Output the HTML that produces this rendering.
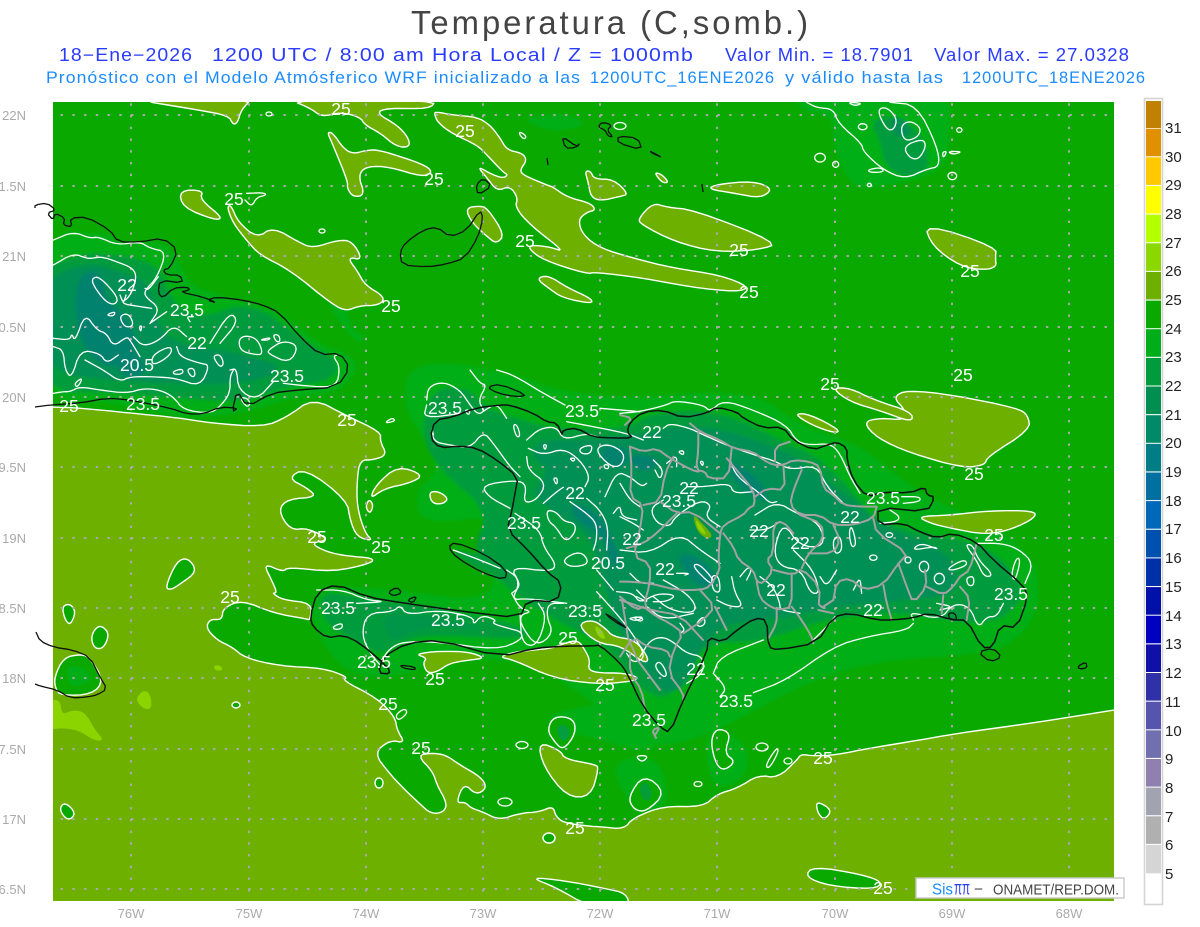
<!DOCTYPE html>
<html lang="es">
<head>
<meta charset="utf-8">
<title>Temperatura (C,somb.)</title>
<style>
html,body{margin:0;padding:0;background:#fff;width:1200px;height:927px;overflow:hidden}
svg{display:block}
text{font-family:"Liberation Sans",sans-serif}
.o{fill:#6eb000;stroke:#fff;stroke-width:1.4;stroke-linejoin:round}
.g{fill:#0aa900;stroke:#fff;stroke-width:1.4;stroke-linejoin:round}
.w polyline,.w polygon,.w ellipse{fill:none;stroke:#fff;stroke-width:1.3;stroke-linejoin:round;stroke-linecap:round;vector-effect:non-scaling-stroke}
.p polyline{fill:none;stroke:#a2a2a2;stroke-width:2;stroke-linejoin:round;stroke-linecap:round;vector-effect:non-scaling-stroke}
.k polyline,.k polygon{fill:none;stroke:#111;stroke-width:1.3;stroke-linejoin:round;vector-effect:non-scaling-stroke}
.l text{fill:#fff;font-size:17.5px;text-anchor:middle;dominant-baseline:central}
.a text{fill:#aaa;font-size:13px}
.c text{fill:#222;font-size:15px}
</style>
</head>
<body>
<svg width="1200" height="927" viewBox="0 0 1200 927" xmlns="http://www.w3.org/2000/svg">
<defs><filter id="b" x="-5%" y="-5%" width="110%" height="110%"><feGaussianBlur stdDeviation="1.6"/></filter></defs>
<rect width="1200" height="927" fill="#fff"/>

<!-- header -->
<text x="411" y="34" font-size="33" fill="#444" letter-spacing="3" textLength="400" lengthAdjust="spacingAndGlyphs">Temperatura (C,somb.)</text>
<g font-size="18" fill="#2a3cff" letter-spacing="1">
<text x="59" y="61" textLength="134" lengthAdjust="spacingAndGlyphs">18−Ene−2026</text>
<text x="212" y="61" textLength="482" lengthAdjust="spacingAndGlyphs">1200 UTC / 8:00 am Hora Local / Z = 1000mb</text>
<text x="725" y="61" textLength="189" lengthAdjust="spacingAndGlyphs">Valor Min. = 18.7901</text>
<text x="934" y="61" textLength="196" lengthAdjust="spacingAndGlyphs">Valor Max. = 27.0328</text>
</g>
<g font-size="17" fill="#1a8cff" letter-spacing="1">
<text x="46" y="83" textLength="535" lengthAdjust="spacingAndGlyphs">Pronóstico con el Modelo Atmósferico WRF inicializado a las</text>
<text x="590" y="83" textLength="185" lengthAdjust="spacingAndGlyphs">1200UTC_16ENE2026</text>
<text x="785" y="83" textLength="159" lengthAdjust="spacingAndGlyphs">y válido hasta las</text>
<text x="962" y="83" textLength="184" lengthAdjust="spacingAndGlyphs">1200UTC_18ENE2026</text>
</g>

<!-- map -->
<clipPath id="m"><rect x="53" y="102" width="1061" height="799"/></clipPath>
<g clip-path="url(#m)">
<rect x="53" y="102" width="1061" height="799" fill="#0aa900"/>

<g class="s" filter="url(#b)">
<!-- halos 23-24 -->
<g fill="#02ae18">
<polygon points="40,232 110,232 120,245 165,240 180,262 190,285 220,295 280,310 320,345 352,355 358,370 340,392 290,398 250,412 190,420 110,402 40,400"/>
<polygon points="405,372 440,360 520,375 560,392 640,398 700,392 760,395 800,425 860,445 900,478 935,500 1030,545 1042,600 1020,640 980,655 880,660 800,685 735,722 680,745 640,745 610,715 560,680 520,660 450,660 385,680 345,672 320,640 310,610 318,585 400,590 470,600 500,585 470,550 500,515 420,525 415,490 440,470 425,440 405,410"/>
<polygon points="793,90 950,90 950,132 947,172 870,190 850,185 833,148 833,115 800,112"/>
<polygon points="543,714 620,700 660,735 650,755 600,740 560,730"/>
<polygon points="612,760 660,755 670,810 640,812 620,790"/>
<polygon points="710,725 750,745 745,780 715,790 705,760"/>
<polygon points="520,118 565,112 590,125 555,132 540,128"/>
<polygon points="325,300 345,300 352,330 365,335 360,345 345,330"/>
</g>

<!-- 22-23 -->
<g fill="#009b3c">
<polygon points="40,272 75,255 110,253 160,265 170,300 200,320 250,300 310,345 340,362 332,380 290,386 240,402 180,398 110,392 40,392"/>
<polygon points="432,388 470,388 484,408 520,420 560,430 630,428 650,413 720,410 790,445 820,458 860,500 875,520 925,535 990,545 1028,592 1000,622 960,622 900,612 830,617 760,642 705,642 682,680 665,700 640,688 620,660 600,642 560,622 540,610 510,590 470,552 490,512 440,470 420,435"/>
<polygon points="318,590 370,600 420,605 522,625 530,640 430,634 400,642 380,655 360,642 325,625"/>
<polygon points="450,548 483,555 505,572 503,578 483,572 457,556"/>
<polygon points="870,120 900,115 925,140 930,170 905,178 885,165 880,140"/>
<polygon points="60,665 90,670 100,682 88,690 65,690"/>
</g>

<!-- 21-22 -->
<g fill="#008f55">
<polygon points="40,280 90,262 120,272 150,282 160,330 180,345 232,352 290,368 240,385 130,382 40,372"/>
<polygon points="540,440 575,440 630,436 700,422 790,452 815,472 860,505 880,527 950,550 960,595 900,600 830,608 780,618 730,622 703,642 690,680 670,695 650,680 640,660 615,622 605,585 590,535 560,515 530,495 550,470 530,455"/>
<polygon points="888,118 905,118 912,135 895,138"/>
</g>
<polygon points="380,615 410,612 500,630 420,626 392,645" fill="#00964a"/>

<!-- 20-21 -->
<g fill="#00826e">
<polygon points="75,278 100,268 106,300 130,320 140,358 105,370 78,340"/>
<polygon points="112,352 130,345 150,372 124,380"/>
<polygon points="597,448 625,445 630,462 612,470"/>
<polygon points="570,500 600,515 612,540 622,560 612,570 603,535 575,520"/>
<polygon points="630,453 660,458 650,472 632,468"/>
<polygon points="677,552 705,560 720,585 700,588 685,572"/>
<polygon points="727,457 760,480 770,503 750,495 730,475"/>
</g>
</g>

<!-- olive main -->
<polygon id="om" class="o" points="50,407 80,408 130,413 180,418 210,423 263,427 287,417 313,398 345,415 381,432 380,441 387,455 373,460 360,460 357,480 357,507 365,533 373,541 357,537 350,520 347,500 305,468 288,478 307,488 317,497 288,499 278,510 290,530 308,528 330,540 310,543 327,552 347,556 373,558 372,563 333,572 288,567 283,572 263,563 273,583 277,593 272,593 283,600 312,603 310,620 307,619 273,613 242,600 223,608 222,620 210,619 206,628 217,640 232,647 245,658 280,666 323,668 348,677 342,680 377,698 395,717 397,730 405,743 390,740 374,753 389,773 405,790 419,803 431,814 444,812 447,803 437,785 433,772 417,755 433,753 446,755 460,765 481,777 487,788 476,795 464,783 456,803 465,802 471,808 483,812 499,820 521,813 539,812 553,806 556,817 565,823 587,826 603,827 624,829 633,818 663,806 703,807 717,794 738,788 758,775 778,778 797,760 801,754 813,756 835,755 871,748 920,740 953,734 1040,722 1120,709 1125,709 1125,910 45,910 45,407"/>

<!-- north olive blobs -->
<polygon class="o" points="138,100 200,110 227,115 231,123 235,121 238,110 248,100"/>
<polygon class="o" points="290,100 310,108 322,117 340,112 360,117 365,125 380,133 397,147 410,147 408,137 397,125 376,113 387,108 430,109 436,100"/>
<polygon class="o" points="327,132 333,145 348,182 347,188 353,197 365,195 358,175 367,166 390,167 423,177 433,172 423,164 380,150 367,150 353,154 343,148 333,133"/>
<polygon class="o" points="434,113 438,123 453,134 477,145 487,155 503,172 508,175 503,178 493,175 477,166 487,178 497,191 510,186 518,198 515,207 530,225 565,252 550,247 533,245 528,248 543,260 587,274 595,272 643,278 690,287 737,292 750,287 720,275 673,268 633,258 600,248 583,235 578,220 587,212 596,210 590,203 567,197 553,187 547,185 523,175 520,170 527,160 522,153 507,150 500,138 490,125 477,117 453,115 437,112"/>
<polygon class="o" points="468,210 480,208 487,210 502,233 495,241 487,235 473,222"/>
<polygon class="o" points="248,242 233,223 227,207 231,205 238,222 257,238 273,227 300,243 313,248 338,240 352,241 363,260 347,257 358,272 365,285 385,297 380,305 358,306 347,311 333,305 290,270 260,255"/>
<polygon class="o" points="182,192 203,192 200,200 220,216 213,218 185,207"/>
<polygon class="o" points="540,280 550,277 567,288 587,297 589,302 563,297 550,288"/>
<polygon class="o" points="587,173 592,173 595,180 612,180 625,193 618,195 600,199 592,195 590,183"/>
<polygon class="o" points="655,173 662,175 668,182 662,182"/>
<polygon class="o" points="712,189 720,185 752,182 769,189 758,197 737,193"/>
<polygon class="o" points="645,220 658,206 670,210 693,212 768,241 750,247 713,249 677,240 648,225"/>
<polygon class="o" points="930,227 993,248 992,258 993,265 983,268 962,265 937,247"/>
<polygon class="o" points="863,422 880,418 905,420 905,410 893,397 907,390 953,395 1017,408 1028,415 1030,430 987,457 985,465 963,468 910,453 877,438"/>
<polygon class="o" points="837,390 853,402 880,410 907,420 907,411 873,400 853,390"/>
<polygon class="o" points="797,415 810,415 837,429 833,432 813,425"/>
<polygon class="o" points="925,517 953,516 987,512 1027,512 1028,518 1008,528 985,533 953,527 937,523"/>
<polygon class="o" points="373,497 378,485 397,468 420,476 408,483 385,488"/>
<polygon class="o" points="430,493 438,492 447,498 443,503 433,503"/>
<polygon class="o" points="415,654 427,658 423,663 427,673 437,672 450,663 470,660 485,658 470,652 440,651"/>
<polygon class="o" points="499,657 515,652 533,650 553,648 565,643 578,640 585,650 590,660 588,670 600,673 624,673 640,678 628,682 596,684 553,678 514,660"/>
<polygon class="o" points="582,627 595,622 607,630 613,637 633,640 645,657 640,660 620,645 600,643"/>
<polygon class="o" points="542,745 562,753 565,760 592,765 595,768 588,793 567,793 547,767"/>
<polygon class="o" points="369,500 373,505 370,513 366,507"/>
<polygon class="o" points="694,515 703,525 712,535 706,538 697,530" style="stroke:none"/>

<!-- green blobs on olive -->
<polygon class="g" points="63,607 70,605 75,612 70,624 65,618"/>
<polygon class="g" points="92,637 97,628 103,628 108,635 103,647 95,647"/>
<polygon class="g" points="57,677 65,660 80,657 88,660 100,680 90,692 63,693 58,687"/>
<g class="s"><polygon points="68,665 85,668 93,682 72,688 66,675" fill="#02ae18"/></g>
<polygon class="g" points="167,586 177,563 187,560 195,572 180,583 172,588"/>
<polygon class="g" points="60,810 65,803 75,813 68,820"/>
<polygon class="g" points="817,802 831,810 824,819 818,812"/>
<polygon class="g" points="537,879 567,882 603,889 621,893 624,905 589,905 560,888"/>
<polygon class="g" points="810,877 817,868 860,875 878,882 870,888 831,885"/>
<ellipse class="g" cx="549" cy="838" rx="6" ry="5"/>
<ellipse class="g" cx="379" cy="783" rx="4" ry="5"/>
<ellipse class="g" cx="236" cy="705" rx="4" ry="3"/>
<polygon class="g" points="549,730 555,718 572,720 574,733 563,748 555,740"/>
<g class="s"><polygon points="556,725 568,725 570,738 560,742" fill="#02985a" opacity=".7"/></g>
<polygon class="g" points="630,797 644,777 663,793 646,810 635,808"/>
<g class="s"><polygon points="638,788 646,780 654,795 645,803" fill="#02985a" opacity=".6"/></g>
<polygon class="g" points="712,743 717,731 730,735 724,753 734,760 724,768 717,763"/>

<!-- bright olive -->
<g fill="#8cd400" class="s">
<polygon points="50,700 60,700 62,715 72,710 85,712 95,730 104,740 95,741 78,730 60,728 50,730"/>
<polygon points="135,700 143,690 150,693 152,708 145,710"/>
<polygon points="213,666 220,665 223,670 216,671"/>
<polygon points="594,625 602,630 606,640 598,637"/>
<polygon points="695,518 703,528 707,536 698,530"/>
</g>

<!-- grid -->
<g stroke="#a9a9a9" stroke-width="2" stroke-dasharray="2.4 9.33" fill="none">
<path d="M131 103.3V901M249 103.3V901M366 103.3V901M483 103.3V901M600 103.3V901M717 103.3V901M835 103.3V901M952 103.3V901M1069 103.3V901"/>
<path d="M25.4 115H1135M25.4 186H1135M25.4 256H1135M25.4 327H1135M25.4 397H1135M25.4 467H1135M25.4 538H1135M25.4 608H1135M25.4 678H1135M25.4 749H1135M25.4 819H1135M25.4 889H1135"/>
</g>

<!-- white contours Cuba -->
<g class="w" transform="translate(30 190) scale(.33333)">
<polyline points="70,150 130,125 180,145 205,140 260,165 330,155 360,175 410,185 380,265 345,300 345,320 390,355 360,400"/>
<polyline points="70,225 130,190 170,205 185,205 215,200 260,215 310,235 320,265 300,320 270,340 330,350 365,355"/>
<polygon points="190,270 210,265 260,320 250,340 225,330 195,290"/>
<polyline points="70,445 120,450 125,430 135,455 165,370 200,420 230,430 250,470 290,440 300,450 330,500"/>
<polyline points="70,470 100,480 105,540 125,565 150,480 210,490 230,520 265,495"/>
<polygon points="370,525 420,495 420,470 370,495"/>
<polyline points="165,510 220,540 270,575 300,560 370,560 440,565 510,590 540,525 510,520 450,500 440,470"/>
<polyline points="310,440 340,470 390,450 430,405 470,440"/>
<polyline points="540,460 600,365 625,395 570,460"/>
<polygon points="630,450 650,440 680,450 695,490 670,490 635,480"/>
<polygon points="720,480 760,455 800,470 775,515 720,490"/>
<polyline points="600,540 620,535 625,600 680,630 730,575"/>
<polyline points="70,610 100,605 120,605 150,590 210,600 290,610 340,595 390,600 430,620 460,660 540,670 570,650 600,610 600,560 610,540"/>
<polyline points="760,580 850,590 920,590 930,530 910,500 920,495"/>
<polyline points="270,315 280,340 288,315"/>
<polygon points="270,380 295,372 310,405 285,410"/>
<polygon points="230,375 255,365 250,378"/>
<polygon points="550,500 570,495 580,520 570,530"/>
<polygon points="430,545 455,537 458,550 435,553"/>
<polygon points="472,540 490,535 495,555 485,560"/>
<polygon points="690,450 720,443 715,450"/>
<polygon points="730,436 745,435 750,452 740,455"/>
<polyline points="345,295 355,300 385,260"/>
<polyline points="360,400 410,365"/>
<polyline points="480,395 470,380 490,380"/>
<polygon points="135,580 155,565 150,580 140,590"/>
<polygon points="632,625 650,625 660,640 650,650"/>
<polygon points="328,410 335,408 332,425"/>
<polyline points="650,10 700,8 710,15 680,22 665,50 645,30"/>
</g>

<!-- white contours Haiti north / centre -->
<g class="w" transform="translate(400 370) scale(.33333)">
<polyline points="80,90 85,50 130,35 180,60 210,105 235,135 255,120 290,100 320,145"/>
<polyline points="210,0 240,40 260,45 235,90 250,120"/>
<polyline points="290,0 340,15 430,70 495,105"/>
<polyline points="600,115 720,125"/>
<polyline points="185,130 70,145 80,105"/>
<polyline points="500,155 580,170 680,190 730,210"/>
<polyline points="100,195 95,170 100,215 150,225 210,235 250,185 280,220 330,290 360,320"/>
<polyline points="380,210 420,175 470,170 490,210 560,190 590,200"/>
<polyline points="385,235 430,255 490,235 540,270 570,320 555,350"/>
<polyline points="380,260 385,300 440,340 410,390 370,400 380,345 350,330 245,345 265,380 330,415"/>
<polyline points="430,400 470,365 490,352"/>
<polyline points="510,395 560,430 590,460 590,510 580,540"/>
<polyline points="560,385 600,420 625,470 620,540"/>
<polygon points="445,425 470,430 490,455 520,460 520,485 495,510 470,470 450,455"/>
<polyline points="345,430 420,480 430,530 470,585 450,605 330,590 360,640 335,690 380,685 500,700"/>
<polygon points="490,570 540,545 565,580 515,590"/>
<polygon points="540,235 575,225 570,250 545,250"/>
<polygon points="590,240 625,225 670,250 660,285 630,285"/>
<polyline points="615,380 650,305 690,320 725,350 740,340"/>
<polyline points="640,430 660,405 665,440 710,450"/>
<polyline points="160,540 240,570 300,595"/>
<polyline points="360,730 365,820 410,830 440,740 415,700"/>
<polygon points="340,168 350,165 360,195 350,200"/>
<polygon points="510,265 525,265 520,275"/>
<polygon points="460,325 472,325 470,345"/>
<polygon points="430,225 440,225 435,240"/>
<polygon points="612,285 625,285 625,295 615,295"/>
<polygon points="195,120 210,122 205,135"/>
<polyline points="650,665 700,670 720,700 770,670 830,675 800,695 760,695"/>
<polyline points="690,610 720,640 760,640"/>
<polyline points="590,665 640,720 690,780 740,860 700,880 680,850"/>
<polygon points="685,745 730,740 710,752"/>
</g>

<!-- white contours south Haiti -->
<g class="w" transform="translate(300 570) scale(.33333)">
<polyline points="50,60 130,60 200,90 260,95 170,100"/>
<polyline points="240,285 210,250 185,195 200,130 280,125 300,105 320,135 415,120 520,140 520,165 545,135 590,150 575,160 625,175 665,185 665,210 590,240 410,215 310,215 270,235 245,270"/>
<polyline points="635,70 660,115 695,125 660,135 665,170 710,230 760,190 740,140 745,100 790,100"/>
<polyline points="635,70 660,50 650,20 620,0"/>
<polygon points="100,170 125,160 125,175 105,178"/>
<polyline points="890,0 940,60"/>
</g>

<!-- white contours DR -->
<g class="w" transform="translate(620 390) scale(.33333)">
<polyline points="0,70 60,65 140,45 165,32 250,45 270,65 310,30 400,60 500,105 530,155 570,165 630,160 660,190 690,260 720,310"/>
<polyline points="845,320 900,320 900,335 850,340"/>
<polyline points="130,115 150,100 210,115 240,130 330,170 420,200 470,215 510,240 590,225 620,290 670,340"/>
<polyline points="330,210 350,260 420,310 450,340 470,335"/>
<polyline points="405,375 470,335 530,370 600,400 615,470 540,470 490,395 460,480 480,530 545,540 570,610 600,610 580,540 520,480"/>
<polyline points="130,330 90,355 110,400 150,410 165,380 240,330 275,345 255,380 300,410"/>
<polyline points="200,290 255,290 330,280 340,310 400,305"/>
<polyline points="0,480 90,490 180,430 240,480 300,520"/>
<polyline points="170,550 210,550 195,555"/>
<polygon points="220,530 240,525 280,570 270,580"/>
<polygon points="275,560 295,560 300,605 280,600"/>
<polyline points="335,560 345,610 370,650 330,650 290,630"/>
<polyline points="130,570 200,610 230,650 215,670 150,660 100,620"/>
<polyline points="390,420 440,420 480,395"/>
<polygon points="695,410 708,460 695,470 688,430"/>
<polygon points="640,450 660,440 665,480 645,490"/>
<ellipse cx="760" cy="503" rx="11" ry="8"/>
<ellipse cx="864" cy="510" rx="9" ry="9"/>
<ellipse cx="912" cy="530" rx="14" ry="16"/>
<ellipse cx="958" cy="566" rx="15" ry="16"/>
<polygon points="985,535 1030,510 1040,525 1000,540"/>
<polygon points="1040,565 1060,560 1060,585 1045,585"/>
<polygon points="1175,550 1190,505 1200,515 1185,570"/>
<ellipse cx="808" cy="435" rx="10" ry="7"/>
<polygon points="880,480 940,470 950,478 905,460"/>
<polygon points="1040,470 1060,470 1075,510 1115,550 1090,555 1070,510"/>
<polyline points="1070,460 1150,460 1200,480 1240,520 1215,580"/>
<polyline points="880,690 870,665 960,690 1000,640 1050,650 1075,715 1100,680 1130,680 1150,640"/>
<polyline points="580,750 630,700 645,680"/>
<polyline points="280,850 300,800 430,750"/>
<polyline points="280,850 320,895 300,920"/>
<polyline points="400,908 500,870 640,770 740,740 860,720 880,700"/>
<polyline points="60,800 90,750 130,740 165,760 200,790 250,800 250,850 200,880"/>
<polygon points="105,830 120,815 140,850 130,860"/>
<polyline points="80,650 130,690 220,670"/>
<polyline points="420,560 460,590 480,640 480,660 540,670"/>
<polygon points="230,700 250,680 255,700 240,710"/>
<polyline points="180,700 195,720 180,730"/>
<polyline points="0,280 30,330 60,350"/>
<polyline points="100,210 130,240 120,270 105,240"/>
<polyline points="140,220 170,195 170,230"/>
<polygon points="175,185 190,182 190,195"/>
<polygon points="240,215 250,215 248,228"/>
<polyline points="360,560 385,530 395,540 380,570"/>
<polyline points="0,380 40,400 70,420"/>
<polyline points="50,600 90,640 50,620"/>
<polygon points="40,680 70,685 60,695"/>
<polyline points="650,540 620,590 600,560"/>
<polyline points="700,600 720,560 725,610"/>
<polyline points="950,640 1000,650 960,660"/>
<polyline points="780,400 830,395 840,380 810,360"/>
</g>

<!-- white contours NE -->
<g class="w" transform="translate(790 95) scale(.33333)">
<polyline points="50,22 80,38 130,42 145,85 215,145 220,170 280,225 345,252 410,222 450,215 440,150 380,30 300,22"/>
<polygon points="265,48 290,40 318,70 310,100 290,100"/>
<ellipse cx="218" cy="95" rx="13" ry="9"/>
<polygon points="335,95 360,80 390,100 380,125 345,135"/>
<polygon points="345,155 395,135 405,155 385,190 360,185"/>
<ellipse cx="90" cy="188" rx="16" ry="13"/>
<ellipse cx="137" cy="208" rx="9" ry="9"/>
<polygon points="235,225 270,218 280,230 245,232"/>
<ellipse cx="238" cy="270" rx="6" ry="5"/>
<ellipse cx="508" cy="105" rx="8" ry="7"/>
<polygon points="458,172 470,170 460,188"/>
<polygon points="475,170 515,170 490,178"/>
<ellipse cx="487" cy="243" rx="13" ry="11"/>
<polygon points="175,22 215,25 195,32"/>
</g>

<!-- small loops -->
<g class="w">
<polygon points="396,715 404,709 407,713 399,720"/>
<ellipse cx="522" cy="745" rx="6" ry="3.5"/>
<ellipse cx="762" cy="747" rx="6" ry="4"/>
<polygon points="766,765 776,749 778,752 770,767"/>
<ellipse cx="788" cy="761" rx="4" ry="3"/>
<ellipse cx="698" cy="784" rx="4" ry="2.5"/>
<ellipse cx="505" cy="802" rx="7" ry="4"/>
<polygon points="636,756 648,756 642,762"/>
<polygon points="385,423 395,421 392,418"/>
<ellipse cx="269" cy="114" rx="3" ry="2"/>
<ellipse cx="322" cy="231" rx="3" ry="2"/>
<ellipse cx="620" cy="126" rx="6" ry="3.5"/>
<polygon points="520,132 526,136 524,139 520,135"/>
</g>

<!-- gray province lines -->
<g class="p" transform="translate(620 390) scale(.33333)">
<polyline points="30,170 70,185 110,175 150,205 215,240 235,245"/>
<polyline points="210,100 240,125 300,150 340,175 400,185 430,210 460,225 490,225 520,210 570,215 600,230 610,295 640,315 670,345 720,350 770,350"/>
<polyline points="235,125 235,180 228,240 255,245 265,265 325,265 335,175"/>
<polyline points="320,205 350,240 400,300 405,345 385,355 370,375 310,405 300,430 295,510 300,540 270,590 240,600 170,600 90,580 30,575 0,575"/>
<polyline points="465,215 465,170 510,155"/>
<polyline points="545,240 520,300 510,345 540,375 600,375 640,405 700,405 760,385 770,350"/>
<polyline points="490,225 495,300 440,295 405,320"/>
<polyline points="310,430 340,470 355,510 400,540 410,575 430,580 460,540 440,510 460,490 460,400 490,395 520,430"/>
<polyline points="460,540 520,555 545,535 600,590 595,660 640,630"/>
<polyline points="540,375 605,400 610,450 565,490 545,535"/>
<polyline points="565,490 640,490 660,450 640,405"/>
<polyline points="515,555 515,650 480,660 450,650 420,625 410,575"/>
<polyline points="515,650 545,690 575,740 580,760"/>
<polyline points="470,660 470,700 445,745"/>
<polyline points="640,630 650,575 690,565 730,600 790,585 835,520 865,490 770,430 760,385"/>
<polyline points="790,585 800,640 815,690"/>
<polyline points="835,520 860,590 880,640 920,590 915,540"/>
<polyline points="920,590 970,615 1000,590 1020,560"/>
<polyline points="1020,590 1050,625 1040,690"/>
<polyline points="970,615 965,670"/>
<polyline points="1020,560 1050,540 1070,460"/>
<polyline points="595,660 640,670"/>
<polyline points="30,170 35,240 30,320 70,345 60,420 40,500 90,520 90,580 70,650 110,680 150,700 190,730 160,780 145,850 190,910 190,935"/>
<polyline points="70,345 120,335 135,250 160,200"/>
<polyline points="120,335 170,370 220,365 300,430"/>
<polyline points="170,370 110,430 70,460 20,475"/>
<polyline points="240,600 285,650 250,690 190,730"/>
<polyline points="285,650 320,720"/>
<polyline points="0,800 40,740 80,770 140,780 150,800"/>
<polyline points="30,790 30,850 65,900 75,960"/>
<polyline points="0,620 50,660 70,650"/>
</g>
<g class="p">
<polyline points="620,415 632,418 625,425"/>
<polyline points="620,600 650,610 680,615 703,640"/>
<polyline points="622,600 630,650 660,690"/>
<polyline points="655,735 660,727 652,730 656,738"/>
</g>

<!-- coast DR/Haiti -->
<g class="k">
<polygon points="435,420 453,417 475,408 500,405 510,405 533,413 547,422 557,423 562,435 563,430 577,428 593,437 613,438 633,438 627,432 630,422 643,412 663,410 683,418 707,413 717,407 737,412 743,418 763,428 783,427 793,440 813,450 827,445 837,442 847,448 847,460 853,480 867,497 883,492 910,493 925,487 927,495 935,497 927,512 878,507 878,525 903,523 920,532 937,538 953,533 977,542 993,560 1023,585 1028,597 1017,628 1000,625 993,647 982,648 967,620 953,620 928,613 913,618 892,620 877,620 850,613 833,617 817,643 778,650 768,647 767,620 755,618 737,630 723,642 708,637 707,653 683,700 670,733 660,727 643,707 627,673 620,663 600,645 593,646 567,646 535,648 500,657 440,640 407,643 383,657 378,673 390,674 388,667 360,643 343,635 327,638 313,627 310,617 317,592 337,584 367,597 403,603 467,612 520,618 527,600 557,602 562,583 547,572 528,550 507,530 512,510 515,493 518,477 497,460 477,448 458,446 440,448 430,438" style="stroke-width:1.5"/>
<polygon points="448,547 455,542 483,553 507,570 505,580 483,573 457,558"/>
<polygon points="487,387 500,384 527,395 517,397 497,393"/>
<polygon points="400,665 415,667 415,670 403,668"/>
<polygon points="388,592 397,587 402,593 393,596"/>
<polygon points="407,600 417,596 413,603"/>
<polygon points="978,652 993,648 1002,657 990,662"/>
<polygon points="948,613 955,613 957,620 950,620"/>
<polygon points="402,265 400,252 405,243 423,230 437,227 450,237 467,230 480,210 483,218 478,237 465,258 447,264 427,267"/>
<polygon points="476,185 483,178 492,186 478,195"/>
<polygon points="598,127 602,122 612,125 607,130 613,137 608,136 605,130"/>
<polygon points="618,136 638,138 642,150 618,143"/>
<polygon points="650,151 663,158 652,153"/>
<polygon points="562,136 577,147 580,143 575,148 565,148"/>
<polyline points="547,158 548,165"/>
<polyline points="702,184 703,192"/>
<polygon points="604,612 630,630 612,620"/>
<polygon points="1078,666 1086,662 1087,668 1079,669"/>
</g>
</g>

<!-- coast overflowing gutter -->
<g class="k">
<polyline points="35,208 35,205 47,203 56,210 47,213 53,220 55,213 65,218 63,225 72,227 70,218 87,217 110,230 118,242 140,242 163,238 178,250 170,268 163,270 167,275 180,275 183,283 160,280 158,293 163,298 173,288 187,287 190,290 180,292 203,297 217,303 207,300 217,297 243,300 263,305 280,313 300,337 320,355 340,353 350,368 337,387 297,390 272,393 247,407 237,390 232,412 238,408 220,407 203,414 187,414 170,408 130,400 107,398 80,403 50,405 35,407"/>
<polyline points="36,632 40,641 53,647 73,650 90,657 100,677 107,689 97,695 87,697 70,698 57,690 40,686 35,684"/>
</g>

<!-- contour labels -->
<g class="l">
<text x="341" y="109">25</text><text x="465" y="131">25</text><text x="434" y="179">25</text><text x="234" y="199">25</text><text x="525" y="241">25</text><text x="739" y="250">25</text><text x="749" y="292">25</text><text x="970" y="271">25</text><text x="391" y="306">25</text><text x="69" y="406">25</text><text x="347" y="420">25</text><text x="830" y="384">25</text><text x="963" y="375">25</text><text x="974" y="474">25</text><text x="994" y="535">25</text><text x="317" y="537">25</text><text x="381" y="547">25</text><text x="230" y="597">25</text><text x="568" y="638">25</text><text x="435" y="679">25</text><text x="605" y="685">25</text><text x="388" y="704">25</text><text x="421" y="748">25</text><text x="823" y="758">25</text><text x="575" y="828">25</text><text x="883" y="888">25</text>
<text x="187" y="310">23.5</text><text x="287" y="376">23.5</text><text x="143" y="404">23.5</text><text x="445" y="408">23.5</text><text x="582" y="411">23.5</text><text x="883" y="498">23.5</text><text x="679" y="501">23.5</text><text x="524" y="523">23.5</text><text x="338" y="608">23.5</text><text x="448" y="620">23.5</text><text x="585" y="611">23.5</text><text x="1011" y="594">23.5</text><text x="374" y="662">23.5</text><text x="736" y="701">23.5</text><text x="649" y="720">23.5</text>
<text x="127" y="285">22</text><text x="197" y="343">22</text><text x="652" y="432">22</text><text x="689" y="488">22</text><text x="575" y="493">22</text><text x="759" y="531">22</text><text x="850" y="517">22</text><text x="800" y="543">22</text><text x="632" y="539">22</text><text x="665" y="569">22</text><text x="776" y="590">22</text><text x="873" y="610">22</text><text x="696" y="669">22</text>
<text x="137" y="365">20.5</text><text x="608" y="563">20.5</text>
</g>

<!-- axes -->
<g class="a">
<g text-anchor="end">
<text x="26" y="120">22N</text><text x="26" y="191">1.5N</text><text x="26" y="261">21N</text><text x="26" y="332">0.5N</text><text x="26" y="402">20N</text><text x="26" y="472">9.5N</text><text x="26" y="543">19N</text><text x="26" y="613">8.5N</text><text x="26" y="683">18N</text><text x="26" y="754">7.5N</text><text x="26" y="824">17N</text><text x="26" y="894">6.5N</text>
</g>
<g text-anchor="middle">
<text x="131" y="918">76W</text><text x="249" y="918">75W</text><text x="366" y="918">74W</text><text x="483" y="918">73W</text><text x="600" y="918">72W</text><text x="717" y="918">71W</text><text x="835" y="918">70W</text><text x="952" y="918">69W</text><text x="1069" y="918">68W</text>
</g>
</g>

<!-- logo -->
<rect x="916" y="878" width="208" height="20" fill="#fff" stroke="#c8c8c8" stroke-width="1.4"/>
<text x="932" y="894.5" font-size="15.5" fill="#1a8cff" textLength="21" lengthAdjust="spacingAndGlyphs">Sis</text>
<text x="954" y="894.5" font-size="19" fill="#2a3cff" textLength="16" lengthAdjust="spacingAndGlyphs">ππ</text>
<text x="974" y="894" font-size="15" fill="#444" textLength="9" lengthAdjust="spacingAndGlyphs">−</text>
<text x="993" y="894.5" font-size="15" fill="#444" textLength="126" lengthAdjust="spacingAndGlyphs">ONAMET/REP.DOM.</text>

<!-- colorbar -->
<rect x="1144.5" y="98.5" width="18" height="806" fill="#fff" stroke="#d4d4d4" stroke-width="1.6"/>
<rect x="1146" y="101" width="15" height="27" fill="#c08000"/>
<rect x="1146" y="128.7" width="15" height="27.6" fill="#e09000"/>
<rect x="1146" y="157.3" width="15" height="27.6" fill="#ffc800"/>
<rect x="1146" y="186" width="15" height="27.6" fill="#ffff00"/>
<rect x="1146" y="214.6" width="15" height="27.6" fill="#b4ff00"/>
<rect x="1146" y="243.3" width="15" height="27.6" fill="#8cd700"/>
<rect x="1146" y="271.9" width="15" height="27.6" fill="#6eb000"/>
<rect x="1146" y="300.6" width="15" height="27.6" fill="#0aa900"/>
<rect x="1146" y="329.2" width="15" height="27.6" fill="#00ae1a"/>
<rect x="1146" y="357.9" width="15" height="27.6" fill="#009b3c"/>
<rect x="1146" y="386.5" width="15" height="27.6" fill="#008f50"/>
<rect x="1146" y="415.2" width="15" height="27.6" fill="#008a68"/>
<rect x="1146" y="443.8" width="15" height="27.6" fill="#007d85"/>
<rect x="1146" y="472.5" width="15" height="27.6" fill="#0070a0"/>
<rect x="1146" y="501.1" width="15" height="27.6" fill="#0068b8"/>
<rect x="1146" y="529.8" width="15" height="27.6" fill="#0050b0"/>
<rect x="1146" y="558.4" width="15" height="27.6" fill="#0030a8"/>
<rect x="1146" y="587.1" width="15" height="27.6" fill="#0010a8"/>
<rect x="1146" y="615.7" width="15" height="27.6" fill="#0000c0"/>
<rect x="1146" y="644.4" width="15" height="27.6" fill="#1010a8"/>
<rect x="1146" y="673" width="15" height="27.6" fill="#3030a8"/>
<rect x="1146" y="701.7" width="15" height="27.6" fill="#5555b0"/>
<rect x="1146" y="730.3" width="15" height="27.6" fill="#7070b0"/>
<rect x="1146" y="759" width="15" height="27.6" fill="#9080b0"/>
<rect x="1146" y="787.6" width="15" height="27.6" fill="#a2a2b0"/>
<rect x="1146" y="816.3" width="15" height="27.6" fill="#b0b0b0"/>
<rect x="1146" y="844.9" width="15" height="28.4" fill="#d5d5d5"/>
<rect x="1146" y="873.6" width="15" height="29" fill="#ffffff"/>
<g class="c">
<text x="1165" y="133">31</text><text x="1165" y="162">30</text><text x="1165" y="190">29</text><text x="1165" y="219">28</text><text x="1165" y="248">27</text><text x="1165" y="276">26</text><text x="1165" y="305">25</text><text x="1165" y="334">24</text><text x="1165" y="362">23</text><text x="1165" y="391">22</text><text x="1165" y="420">21</text><text x="1165" y="448">20</text><text x="1165" y="477">19</text><text x="1165" y="506">18</text><text x="1165" y="534">17</text><text x="1165" y="563">16</text><text x="1165" y="592">15</text><text x="1165" y="621">14</text><text x="1165" y="649">13</text><text x="1165" y="678">12</text><text x="1165" y="707">11</text><text x="1165" y="736">10</text><text x="1165" y="764">9</text><text x="1165" y="793">8</text><text x="1165" y="822">7</text><text x="1165" y="850">6</text><text x="1165" y="879">5</text>
</g>
</svg>
<script>
(function(){
function ch(p,c,n){for(var i=0;i<n;i++){var q=[],L=p.length,m=c?L:L-1;if(!c)q.push(p[0]);for(var j=0;j<m;j++){var a=p[j],b=p[(j+1)%L];q.push([.75*a[0]+.25*b[0],.75*a[1]+.25*b[1]]);q.push([.25*a[0]+.75*b[0],.25*a[1]+.75*b[1]]);}if(!c)q.push(p[L-1]);p=q;}return p;}
function run(sel,n,grow){document.querySelectorAll(sel).forEach(function(e){var t=e.getAttribute('points');if(!t)return;var p=t.trim().split(/\s+/).map(function(s){return s.split(',').map(Number);});if(p.length<3)return;
var closed=e.tagName.toLowerCase()==='polygon';
if(e.id==='om'){var tail=p.slice(-3);p=ch(p.slice(0,-3),false,n).concat(tail);}
else{var few=closed&&p.length<=9&&grow;var cx=0,cy=0;p.forEach(function(a){cx+=a[0];cy+=a[1];});cx/=p.length;cy/=p.length;
p=ch(p,closed,n);
if(few){p=p.map(function(a){return[cx+(a[0]-cx)*1.15,cy+(a[1]-cy)*1.15];});}}
e.setAttribute('points',p.map(function(a){return a[0].toFixed(1)+','+a[1].toFixed(1);}).join(' '));});}
run('.o,.g,.w polygon,.w polyline',2,true);
run('.s polygon',2,false);
run('.k polygon,.k polyline,.p polyline',1,false);
})();
</script>
</body>
</html>
